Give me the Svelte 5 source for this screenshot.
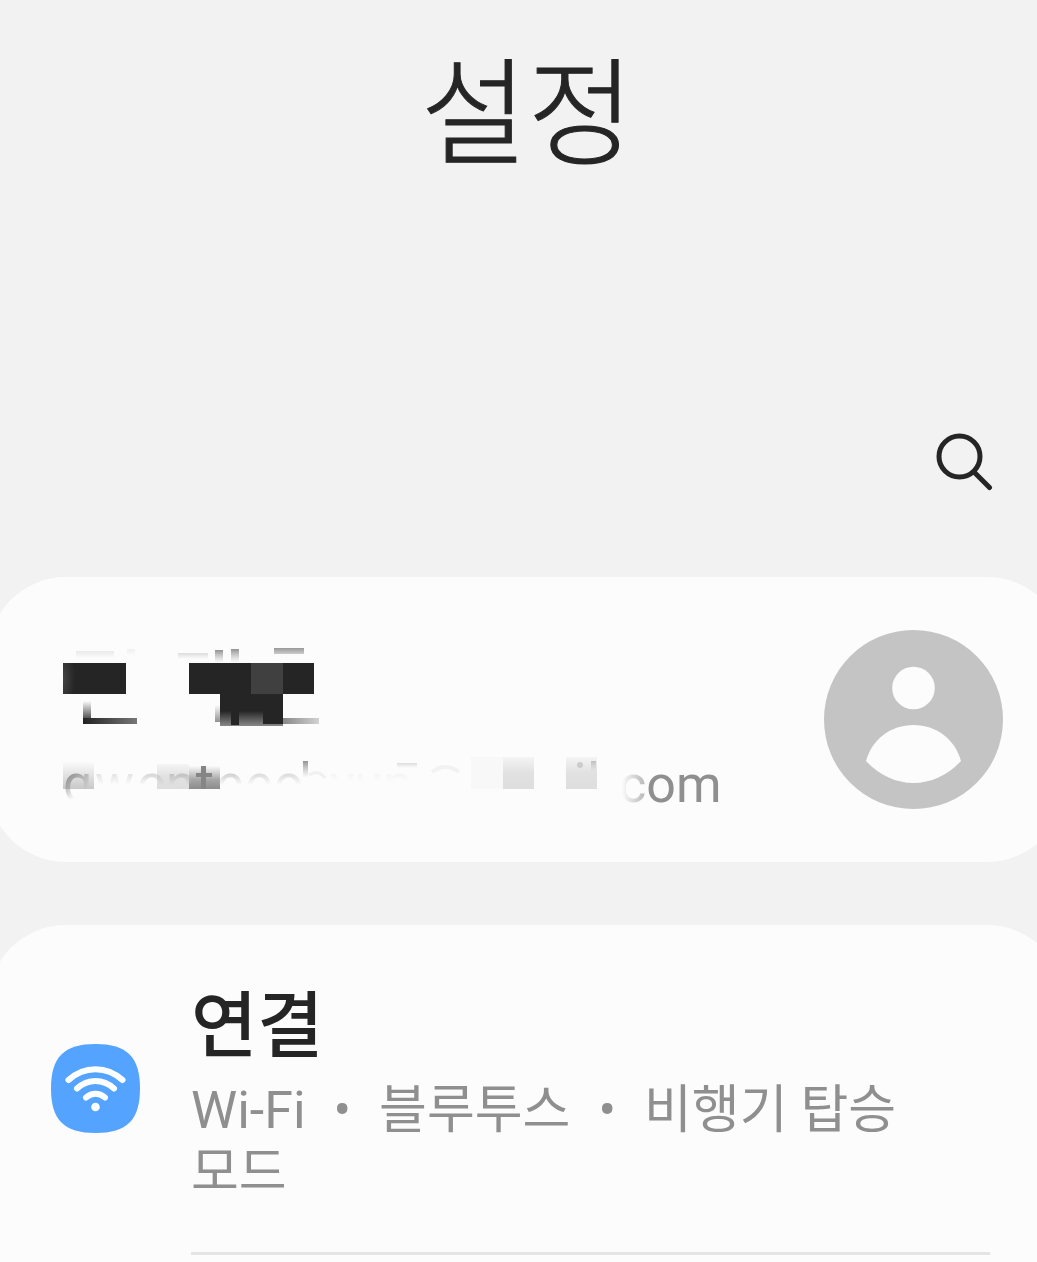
<script>
  const topics = ['Wi-Fi', '블루투스', '비행기 탑승 모드'];
</script>

<main>
  <header>
    <h1>설정</h1>
    <div class="toolbar">
      <button class="search" type="button" aria-label="검색">
        <svg viewBox="0 0 60 60" aria-hidden="true">
          <circle cx="25.5" cy="25.5" r="20.5" />
          <path d="M40 41L55.500 56.500" />
        </svg>
      </button>
    </div>
  </header>

  <a class="card account" href="#account" aria-label="계정">
    <div class="identity">
      <svg class="name" viewBox="0 0 260 84" aria-hidden="true">
        <defs>
          <linearGradient id="down" x2="0" y2="1">
            <stop stop-color="#252525" stop-opacity="0" />
            <stop offset="1" stop-color="#252525" />
          </linearGradient>
          <linearGradient id="up" x2="0" y2="1">
            <stop stop-color="#777" stop-opacity=".8" />
            <stop offset="1" stop-color="#aaa" stop-opacity="0" />
          </linearGradient>
          <linearGradient id="pale" x2="0" y2="1">
            <stop stop-color="#ddd" />
            <stop offset="1" stop-color="#fcfcfc" />
          </linearGradient>
          <linearGradient id="bar" x2="0" y2="1">
            <stop stop-color="#999" />
            <stop offset="1" stop-color="#ccc" />
          </linearGradient>
          <linearGradient id="foot" x2="0" y2="1">
            <stop stop-color="#252525" />
            <stop offset="1" stop-color="#888" />
          </linearGradient>
          <linearGradient id="tail" x2="1" y2="0">
            <stop stop-color="#888" />
            <stop offset="1" stop-color="#d2d2d2" />
          </linearGradient>
          <linearGradient id="line" x2="1" y2="0">
            <stop stop-color="#222" />
            <stop offset="1" stop-color="#777" />
          </linearGradient>
          <radialGradient id="edge" cx="0" cy=".5" r="1">
            <stop stop-color="#444" />
            <stop offset="1" stop-color="#252525" />
          </radialGradient>
        </defs>
        <rect x="13" y="6" width="38" height="7" fill="url(#pale)" opacity=".6" />
        <rect x="64" y="4" width="8" height="7" fill="url(#pale)" opacity=".4" />
        <rect x="115" y="8" width="30" height="6" fill="url(#pale)" />
        <rect x="152" y="5" width="8" height="13" fill="url(#up)" />
        <rect x="168" y="4" width="8" height="14" fill="url(#up)" />
        <rect x="211" y="3" width="30" height="6" fill="url(#bar)" />
        <rect y="18" width="63" height="31" fill="#252525" />
        <rect y="18" width="12" height="31" fill="url(#edge)" />
        <path d="M126 18H251V49H220V70H157V49H126Z" fill="#252525" />
        <rect x="188" y="18" width="32" height="31" fill="#404040" />
        <rect x="20" y="56" width="8" height="22" fill="url(#down)" />
        <rect x="20" y="73" width="54" height="6" fill="url(#line)" />
        <rect x="152" y="60" width="6" height="17" fill="url(#down)" opacity=".5" />
        <rect x="157" y="66" width="63" height="15" fill="url(#foot)" />
        <rect x="168" y="66" width="8" height="14" fill="#252525" />
        <rect x="200" y="66" width="20" height="13" fill="#252525" />
        <rect x="220" y="73" width="36" height="6" fill="url(#tail)" />
      </svg>
      <div class="email">
        <svg viewBox="0 0 556 70" aria-hidden="true">
          <defs>
            <linearGradient id="block" x2="0" y2="1">
              <stop stop-color="#fcfcfc" />
              <stop offset="1" stop-color="#c8c8c8" />
            </linearGradient>
            <linearGradient id="dark" x2="0" y2="1">
              <stop stop-color="#fafafa" />
              <stop offset=".6" stop-color="#a5a5a5" />
              <stop offset="1" stop-color="#8c8c8c" />
            </linearGradient>
            <linearGradient id="light" x2="0" y2="1">
              <stop stop-color="#f4f4f4" />
              <stop offset=".5" stop-color="#e1e1e1" />
              <stop offset="1" stop-color="#dedede" />
            </linearGradient>
            <linearGradient id="ink" gradientUnits="userSpaceOnUse" x1="0" x2="0" y1="21" y2="35">
              <stop stop-color="#b8b8b8" />
              <stop offset="1" stop-color="#b8b8b8" stop-opacity="0" />
            </linearGradient>
            <linearGradient id="ghost" gradientUnits="userSpaceOnUse" x1="0" x2="0" y1="21" y2="32">
              <stop stop-color="#f2f2f2" />
              <stop offset="1" stop-color="#f2f2f2" stop-opacity="0" />
            </linearGradient>
            <linearGradient id="initial" gradientUnits="userSpaceOnUse" x1="4" x2="18" y1="24" y2="43">
              <stop stop-color="#8c8c8c" />
              <stop offset="1" stop-color="#8c8c8c" stop-opacity="0" />
            </linearGradient>
          </defs>
          <rect y="11" width="31" height="28" fill="url(#block)" />
          <rect x="94" y="14" width="32" height="25" fill="url(#light)" />
          <rect x="126" y="16" width="31" height="23" fill="url(#dark)" />
          <rect x="408" y="7" width="32" height="32" fill="#f8f8f8" />
          <rect x="440" y="7" width="31" height="32" fill="url(#light)" />
          <rect x="503" y="7" width="31" height="32" fill="url(#light)" />
          <circle cx="517" cy="15" r="3" fill="#ccc" />
          <rect x="528" y="11" width="5" height="11" fill="url(#up)" opacity=".5" />
          <g class="letters">
            <text x="0" y="51" fill="url(#initial)">g</text>
            <text x="32" y="51" fill="url(#ink)" opacity=".45">w</text>
            <text x="74" y="51" fill="url(#ink)" opacity=".7">o</text>
            <text x="103" y="51" fill="url(#ink)">n</text>
            <text x="153" y="51" fill="url(#ink)" opacity=".8">e</text>
            <text x="182" y="51" fill="url(#ink)" opacity=".6">e</text>
            <text x="211" y="51" fill="url(#ink)" opacity=".6">o</text>
            <text x="267" y="51" fill="url(#ghost)">yun</text>
          </g>
          <path d="M138 16H143V23H149V27H143V39H138V27H133V23H138Z" fill="#858585" />
          <rect x="240" y="11" width="5" height="17" fill="url(#up)" />
          <path d="M246 25Q256 19 262 28" fill="none" stroke="#f0f0f0" stroke-width="3" />
          <rect x="334" y="13" width="20" height="5" fill="url(#pale)" />
          <path d="M369 22Q382 12 396 22" fill="none" stroke="#f2f2f2" stroke-width="4" />
        </svg>
        <span><span class="faded">c</span>om</span>
      </div>
    </div>
    <svg class="avatar" viewBox="0 0 179 179" aria-hidden="true">
      <circle cx="89.500" cy="89.500" r="89.500" fill="#c4c4c4" />
      <circle cx="89.500" cy="58" r="21.300" fill="#fcfcfc" />
      <path d="M42 131C48 109 67 95 89.500 95S131 109 137 131C124 145 107 153 89.500 153S55 145 42 131Z" fill="#fcfcfc" />
    </svg>
  </a>

  <section class="card settings">
    <a class="item" href="#connections">
      <svg class="icon" viewBox="0 0 89 89" aria-hidden="true">
        <path d="M44.500 0C76 0 89 13 89 44.500S76 89 44.500 89 0 76 0 44.500 13 0 44.500 0Z" fill="#54a3ff" />
        <g fill="none" stroke="#fcfeff" stroke-width="6" stroke-linecap="round">
          <path d="M17.500 36C33 21.500 56 21.500 71.500 36" />
          <path d="M26 44.500C37 34.500 52 34.500 63 44.500" />
          <path d="M35 53.500C41 48.500 48 48.500 54 53.500" />
        </g>
        <circle cx="44.500" cy="63" r="4.300" fill="#fcfeff" />
      </svg>
      <div class="copy">
        <h2>연결</h2>
        <p>
          {#each topics as topic, i}{#if i > 0}<span class="dot">•</span>{/if}{topic}{/each}
        </p>
      </div>
    </a>
  </section>
</main>

<style>
  :global(body) {
    margin: 0;
    background: #f2f2f2;
  }

  main {
    display: flex;
    flex-direction: column;
    min-height: 100vh;
    overflow: hidden;
    color: #252525;
    font-family: Roboto, 'Noto Sans CJK KR', sans-serif;
  }

  h1,
  h2,
  p {
    margin: 0;
    font-weight: 400;
  }

  h1 {
    padding: 35px 0 0 18px;
    font-size: 116px;
    font-weight: 300;
    line-height: 160px;
    text-align: center;
    -webkit-text-stroke: 1px currentColor;
  }

  .toolbar {
    display: flex;
    justify-content: flex-end;
    padding: 236px 43px 86px;
  }

  .search {
    width: 60px;
    height: 60px;
    padding: 0;
    border: 0;
    background: none;
    color: inherit;
  }

  .search svg {
    display: block;
    fill: none;
    stroke: currentColor;
    stroke-width: 5;
    stroke-linecap: round;
  }

  .card {
    margin: 0 -28px 0 -12px;
    border-radius: 78px;
    background: #fcfcfc;
  }

  a {
    color: inherit;
    text-decoration: none;
  }

  .account {
    display: flex;
    align-items: flex-start;
    justify-content: space-between;
    padding: 53px 62px 42px 75px;
  }

  .identity {
    padding-top: 15px;
  }

  .name {
    display: block;
    width: 260px;
    height: 84px;
  }

  .email {
    display: flex;
    margin-top: 21px;
    color: #8f8f8f;
    font-size: 52px;
    line-height: 70px;
  }

  .email svg {
    width: 556px;
    height: 70px;
  }

  .letters {
    font-size: 52px;
  }

  .faded {
    background: linear-gradient(90deg, #fcfcfc 10%, #b4b4b4);
    background-clip: text;
    color: transparent;
  }

  .avatar {
    flex: none;
    width: 179px;
    height: 179px;
  }

  .settings {
    flex: 1;
    margin-top: 63px;
    border-radius: 78px 78px 0 0;
  }

  .item {
    display: flex;
    align-items: center;
    gap: 51px;
    padding: 0 75px 0 63px;
  }

  .icon {
    flex: none;
    width: 89px;
    height: 89px;
    margin-bottom: 4px;
  }

  .copy {
    flex: 1;
    padding: 52px 0 48px;
    border-bottom: 3px solid #e4e4e4;
  }

  h2 {
    font-size: 72px;
    font-weight: 500;
    line-height: 100px;
  }

  p {
    margin-top: 3px;
    padding-right: 72px;
    color: #8f8f8f;
    font-size: 52px;
    line-height: 62px;
    word-break: keep-all;
  }

  .dot {
    margin: 0 28px;
  }
</style>
